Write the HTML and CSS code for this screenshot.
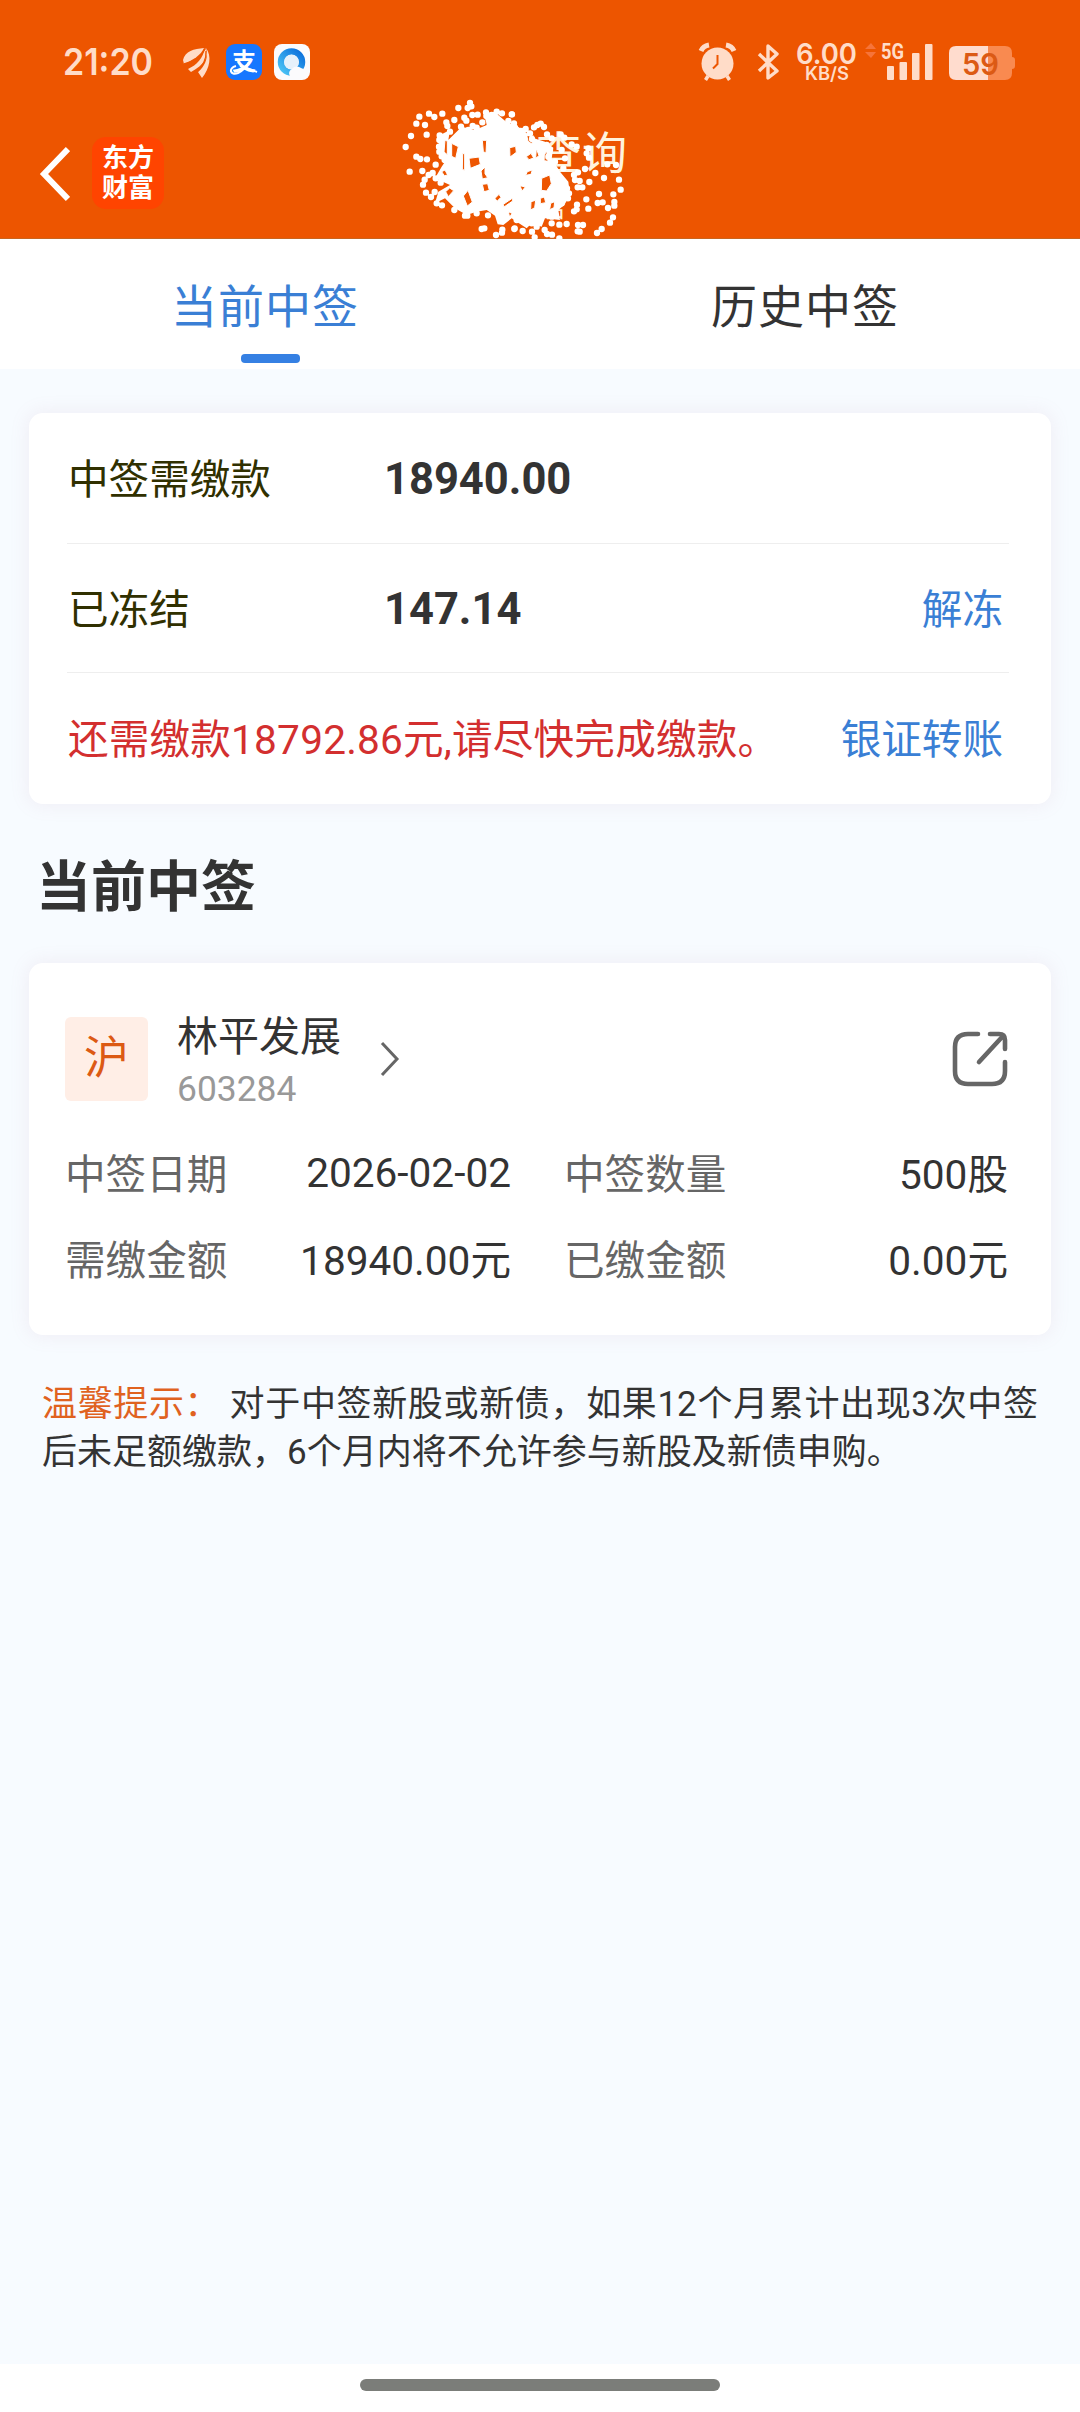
FILE: index.html
```
<!DOCTYPE html>
<html lang="zh-CN">
<head>
  <meta charset="UTF-8" />
  <title>中签查询</title>
  <link rel="stylesheet" href="styles.css">
</head>
<body>
  <header class="top">
    <div class="status">
      <svg class="status-left" width="270" height="44" viewBox="60 40 270 44">
        <text class="clock" x="63" y="75" textLength="90" lengthAdjust="spacingAndGlyphs">21:20</text>
        <g fill="#ffdcc8">
          <path d="M183 60C185 51 194 49 204 48C201 55 193 60 184 64Z"/>
          <path d="M188 69C197 65 203 58 205 48C210 56 204 65 191 72Z" />
          <path d="M198 72C204 67 209 59 206 48C212 56 210 68 202 78Z" />
        </g>
        <path d="M184 64Q200 60 205 49M195 74Q207 63 206 51" stroke="#ed5500" stroke-width="1.3" fill="none"/>
        <!-- pay app -->
        <rect x="226" y="44" width="36" height="36" rx="9" fill="#1677ff"/>
        <text class="pay" x="232" y="70">支</text>
        <path d="M236 66C228 68 230 76 238 73C244 70 247 66 249 62M240 66Q248 68 257 72" stroke="#fff" stroke-width="2" fill="none"/>
        <!-- browser app -->
        <rect x="274" y="44" width="36" height="36" rx="8" fill="#fbfbfd"/>
        <circle cx="291.500" cy="62" r="10.500" fill="none" stroke="url(#ring)" stroke-width="6.500"/>
        <circle cx="291.500" cy="62" r="7.500" fill="#e6f1fb"/>
        <path d="M290 76A4.500 4.500 0 0 1 292 69A6 6 0 0 1 301 68A5 5 0 0 1 305 74V76Z" fill="#fbfbfd"/>
        <defs>
          <linearGradient id="ring" x1="0" y1="1" x2="1" y2="0">
            <stop offset="0" stop-color="#4cc4f5"/>
            <stop offset="1" stop-color="#0a6fdc"/>
          </linearGradient>
        </defs>
      </svg>

      <svg class="status-right" width="325" height="44" viewBox="695 40 325 44">
        <!-- alarm -->
        <g fill="#ffdcc8" stroke="#ffdcc8">
          <circle cx="717.500" cy="63.500" r="16" stroke="none"/>
          <path d="M708 76L705.500 80M727 76L729.500 80" stroke-width="3.500"/>
          <path d="M701 51Q703 46 709 45M734 51Q732 46 726 45" fill="none" stroke-width="5"/>
        </g>
        <path d="M717.500 55V64L713 68.500" stroke="#ed5500" stroke-width="2" fill="none"/>
        <!-- bluetooth -->
        <path d="M759 54L777 71L768 78V46L777 54L759 71" stroke="#ffdcc8" stroke-width="3.400" stroke-linejoin="round" fill="none"/>
        <text class="speed" x="796" y="64" textLength="61" lengthAdjust="spacingAndGlyphs">6.00</text>
        <text class="unit" x="805" y="80" textLength="44" lengthAdjust="spacingAndGlyphs">KB/S</text>
        <path d="M865 49L871 43L876 49ZM865 52L871 58L876 52Z" fill="#f6743a"/>
        <text class="net" x="881" y="58.500" textLength="23" lengthAdjust="spacingAndGlyphs">5G</text>
        <g fill="#ffdcc8">
          <rect x="887" y="66" width="7" height="14" rx="1"/>
          <rect x="899.500" y="62" width="7.500" height="18" rx="1"/>
          <rect x="912" y="53" width="7.500" height="27" rx="1"/>
          <rect x="925" y="44" width="7.500" height="36" rx="1"/>
        </g>
        <!-- battery -->
        <path d="M988 46H1005Q1012 46 1012 53V57Q1015 57 1015 60V66Q1015 69 1012 69V73Q1012 80 1005 80H988Z" fill="#f98a50"/>
        <path d="M988 46H956Q949 46 949 53V73Q949 80 956 80H988Z" fill="#ffdcce"/>
        <text class="level" x="962" y="74.500" textLength="37" lengthAdjust="spacingAndGlyphs">59</text>
      </svg>
    </div>

    <div class="nav">
      <svg class="back" width="32" height="56" viewBox="0 0 32 56"><path d="M30 3L6 28L30 53" fill="none" stroke="#fff" stroke-width="6"/></svg>
      <div class="logo">东方<br>财富</div>
      <h1 class="title">中签查询<small>信</small></h1>
      <!-- spray over the account name -->
      <svg class="spray" width="245" height="145" viewBox="0 0 735 435">
        <path fill="#fff" d="M134 121L165 105L160 135L200 95L240 105L275 90L268 55L300 52L335 82L365 92L390 110L412 128L450 140L475 158L470 190L495 230L520 260L525 300L508 330L490 345L495 375L450 370L440 395L410 385L395 400L365 380L350 370L325 390L308 388L300 362L275 345L245 350L215 360L180 340L150 310L120 325L130 290L165 270L120 250L140 215L150 200L130 175Z"/>
        <path class="gaps" d="M150 135l7 4v40l-10-8zM170 145l20 10-8 35-12-6zM203 175l6 2v50l-7-5zM222 190l30-4 4 22-30 12zM262 136l13 0-2 38-8-4zM205 303l14-17 13 35-15 12zM140 230l10-5 8 15-10 2zM152 290l12-11 12 8-16 18zM258 228l12-12v20l8 12-16 4zM262 268l16-2 5 20-16 4zM300 310l12-12 6 9-12 12zM325 328l28-19 0 9-26 18zM344 158l18-4 2 18-19 14zM396 125l10-15 8 12-3 25-12-8zM394 185l14-10 8 14-14 5zM397 230l15-5-4 13-16 3zM440 250l24-10 5 26-14 22-16-2zM424 160l8 22-10 8zM448 180l7-12 4 30-12 5zM408 320l14-4-3 22-12 7zM436 310l12-4 4 17-16 3zM375 272l16 4-10 12zM467 325l12-5-2 18-13 6zM340 350l11 5-7 12z"/>
        <path class="dots" d="M225 24h0M229 34h0M218 39h0M190 39h0M102 56h0M118 66h0M142 56h0M73 65h0M64 86h0M90 90h0M178 75h0M154 82h0M157 93h0M208 68h0M214 77h0M232 60h0M248 59h0M273 52h0M274 63h0M233 93h0M262 82h0M198 95h0M48 123h0M95 119h0M32 156h0M64 185h0M76 192h0M96 193h0M44 230h0M82 228h0M122 209h0M134 121h0M133 135h0M132 155h0M133 170h0M140 184h0M149 195h0M101 240h0M89 254h0M84 269h0M93 293h0M108 306h0M119 291h0M137 263h0M125 325h0M141 331h0M178 345h0M210 362h0M217 362h0M245 355h0M279 361h0M260 402h0M268 400h0M303 420h0M322 404h0M321 413h0M358 402h0M113 234h0M122 250h0M321 55h0M351 58h0M340 78h0M305 50h0M290 60h0M281 72h0M165 110h0M188 130h0M220 105h0M245 98h0M290 88h0"/>
        <path class="dots" transform="translate(345)" d="M5 58h0M12 85h0M15 98h0M47 102h0M32 108h0M72 97h0M82 90h0M92 86h0M102 96h0M60 115h0M66 132h0M111 118h0M125 130h0M152 118h0M163 128h0M120 165h0M115 185h0M105 205h0M155 165h0M165 190h0M135 200h0M160 220h0M185 148h0M200 155h0M82 155h0M110 150h0M235 160h0M230 175h0M237 188h0M225 222h0M256 234h0M292 208h0M318 210h0M282 249h0M327 254h0M332 284h0M310 298h0M267 297h0M229 313h0M263 324h0M278 322h0M313 321h0M313 332h0M294 339h0M235 341h0M201 329h0M200 343h0M192 349h0M309 367h0M300 383h0M275 402h0M261 414h0M204 390h0M219 390h0M203 409h0M209 410h0M238 261h0M203 277h0M217 277h0M204 232h0M192 240h0M195 255h0M209 258h0M170 387h0M148 389h0M104 405h0M111 417h0M126 419h0M148 430h0M74 427h0M38 408h0M14 400h0M66 410h0M171 280h0M177 295h0M174 310h0M150 310h0M155 325h0M130 350h0M125 365h0M125 385h0M20 375h0M65 385h0M80 395h0"/>
      </svg>
    </div>
  </header>

  <nav class="tabs">
    <div class="tab active"><span>当前中签</span></div>
    <div class="tab"><span>历史中签</span></div>
  </nav>

  <main class="content">
    <section class="card summary">
      <div class="row"><span class="label">中签需缴款</span><b>18940.00</b></div>
      <div class="row"><span class="label">已冻结</span><b>147.14</b><a class="link">解冻</a></div>
      <div class="row"><span class="warn">还需缴款18792.86元,请尽快完成缴款。</span><a class="link">银证转账</a></div>
    </section>

    <h2>当前中签</h2>

    <section class="card stock">
      <div class="stock-head">
        <div class="market">沪</div>
        <div class="stock-name">
          <div class="name">林平发展</div>
          <div class="code">603284</div>
        </div>
        <svg class="arrow" width="20" height="36" viewBox="0 0 20 36"><path d="M2 2L17 18L2 34" fill="none" stroke="#666" stroke-width="3"/></svg>
        <svg class="share" width="56" height="56" viewBox="0 0 56 56" fill="none" stroke="#666" stroke-width="4.600" stroke-linecap="round">
          <path d="M26 3H16Q3 3 3 16V40Q3 53 16 53H40Q53 53 53 40V31"/>
          <path d="M38 3H47Q53 3 53 9V18M51 5L27 31"/>
        </svg>
      </div>
      <div class="grid">
        <span class="key">中签日期</span><span class="val date">2026-02-02</span>
        <span class="key second">中签数量</span><span class="val">500股</span>
        <span class="key">需缴金额</span><span class="val">18940.00元</span>
        <span class="key second">已缴金额</span><span class="val">0.00元</span>
      </div>
    </section>

    <p class="tips"><em>温馨提示：</em> 对于中签新股或新债，如果12个月累计出现3次中签后未足额缴款，6个月内将不允许参与新股及新债申购。</p>
  </main>

  <footer class="home"><i></i></footer>
</body>
</html>
```
FILE: styles.css
```
* {
  box-sizing: border-box;
}

body {
  margin: 0;
  height: 2412px;
  display: flex;
  flex-direction: column;
  background: #f7fbff;
  font-family: Roboto, "Noto Sans CJK SC", sans-serif;
  color: #333;
  overflow: hidden;
}

.top {
  height: 239px;
  flex: none;
  background: #ed5500;
  border-bottom: 1px solid #c9651f;
}

/* status bar */
.status {
  height: 124px;
  padding: 40px 60px 0;
  display: flex;
  justify-content: space-between;
}

.status text {
  font-family: Inter, sans-serif;
  font-weight: 600;
  fill: #ffdcc8;
}

.status .clock {
  font-size: 37px;
}

.status .speed {
  font-size: 29px;
}

.status .unit {
  font-size: 18px;
}

.status .net {
  font-family: Roboto, sans-serif;
  font-weight: bold;
  font-size: 22px;
}

.status .level {
  font-size: 30px;
  fill: #dc5a14;
}

.status .pay {
  font-family: "Noto Sans CJK SC", sans-serif;
  font-size: 24px;
  fill: #fff;
}

.nav {
  display: flex;
  height: 114px;
  padding: 13px 0 0 38px;
  position: relative;
}

.back {
  margin-top: 9px;
}

.logo {
  width: 72px;
  height: 72px;
  margin-left: 22px;
  padding-top: 6px;
  border-radius: 14px;
  background: #ff4400;
  color: #fff;
  font-size: 26px;
  font-weight: bold;
  line-height: 30px;
  text-align: center;
}

.title {
  margin: -11px 0 0 280px;
  width: 188px;
  font-size: 45px;
  font-weight: normal;
  letter-spacing: 1px;
  line-height: 58px;
  color: #fff3dc;
}

.title small {
  display: block;
  font-size: 30px;
  line-height: 44px;
  padding-left: 92px;
}

.spray {
  position: absolute;
  left: 395px;
  top: -29px;
}

.gaps {
  fill: #ed5500;
  stroke: #fff;
  stroke-width: 3;
}

.dots {
  fill: none;
  stroke: #fff;
  stroke-width: 19;
  stroke-linecap: round;
}

/* tabs */
.tabs {
  height: 130px;
  flex: none;
  display: flex;
  background: #fff;
}

.tab {
  flex: 1;
  display: flex;
  flex-direction: column;
  align-items: center;
  padding-top: 33px;
  font-size: 46px;
  line-height: 70px;
}

.tab span {
  letter-spacing: 1px;
  margin-right: 10px;
}

.active {
  color: #3a7fd5;
}

.active::after {
  content: "";
  width: 59px;
  height: 9px;
  margin-top: 12px;
  border-radius: 4px;
  background: #3580e3;
}

.content {
  flex: 1;
  padding: 44px 29px 0;
}

.card {
  background: #fff;
  border-radius: 14px;
  box-shadow: 0 0 18px 2px rgba(190, 130, 160, 0.1);
}

.summary {
  height: 391px;
  padding: 0 42px 0 38px;
}

.row {
  height: 131px;
  padding-bottom: 3px;
  display: flex;
  align-items: center;
  border-bottom: 1px solid #eee;
  font-size: 40.6px;
}

.row + .row {
  height: 129px;
}

.row:last-child {
  border: 0;
}

.label {
  width: 317px;
  padding-left: 1px;
  color: #303000;
}

.row b {
  font-size: 43.5px;
  padding-top: 5px;
}

.link {
  margin-left: auto;
  padding-right: 6px;
  color: #3a7fd5;
}

.warn {
  color: #d32f2f;
  padding-left: 1px;
  letter-spacing: 0.2px;
}

h2 {
  margin: 43px 0 36px 7px;
  font-size: 55px;
  line-height: 80px;
}

.stock {
  height: 372px;
  padding: 48px 43px 0 36px;
}

.stock-head {
  height: 96px;
  display: flex;
}

.market {
  width: 83px;
  height: 84px;
  margin-top: 6px;
  border-radius: 6px;
  background: #ffeee6;
  color: #dc5a14;
  font-size: 45px;
  line-height: 84px;
  text-align: center;
}

.stock-name {
  width: 203px;
  margin-left: 29px;
}

.name {
  font-size: 41px;
  line-height: 53px;
}

.code {
  font-size: 35.4px;
  line-height: 50px;
  color: #999;
}

.arrow {
  margin-top: 30px;
}

.share {
  margin: 20px 0 0 auto;
}

.grid {
  display: grid;
  grid-template-columns: 165px 281px 210px 1fr;
  grid-auto-rows: 86px;
  align-items: center;
  margin-top: 21px;
  font-size: 40.6px;
}

.key {
  color: #666;
}

.second {
  padding-left: 53px;
  white-space: nowrap;
}

.val {
  text-align: right;
}

.date {
  padding-top: 4px;
}

.tips {
  margin: 46px 13px 0;
  font-size: 35px;
  line-height: 48px;
  text-align: justify;
}

.tips em {
  font-style: normal;
  color: #e0621f;
}

/* gesture bar */
.home {
  height: 48px;
  flex: none;
  background: #fff;
  padding-top: 15px;
}

.home i {
  display: block;
  width: 360px;
  height: 12px;
  margin: 0 auto;
  border-radius: 6px;
  background: #7b7d79;
}
```
